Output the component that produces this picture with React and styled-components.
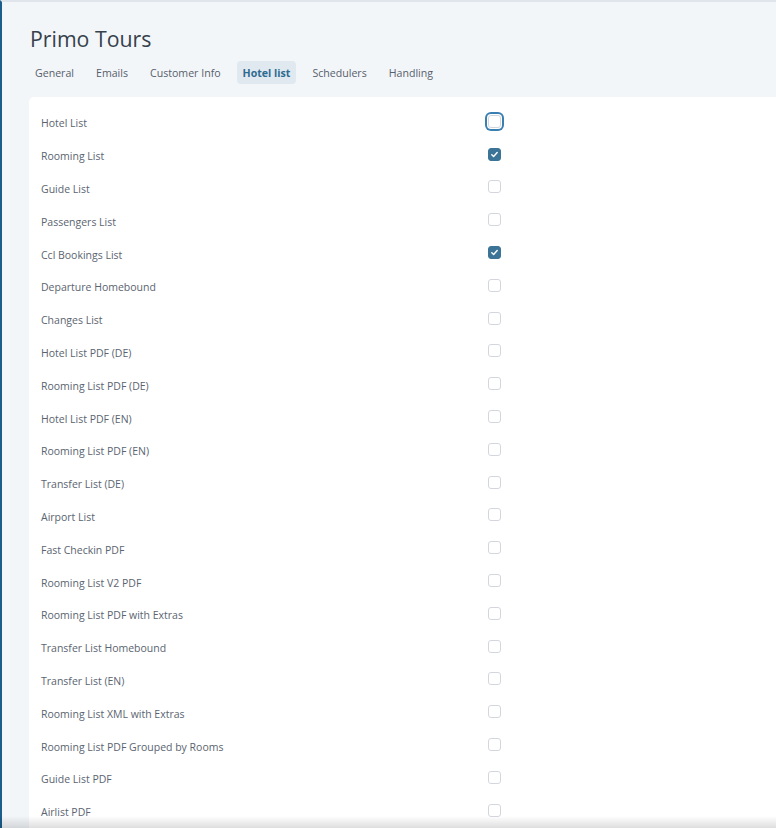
import React, { useState } from "react";
import styled, { createGlobalStyle } from "styled-components";

const Global = createGlobalStyle`
  html, body { margin: 0; padding: 0; }
  body {
    background: #f3f6f9;
    font-family: "Open Sans", "Noto Sans", sans-serif;
    overflow: hidden;
  }
`;

const Page = styled.div`
  min-height: 828px;
  box-sizing: border-box;
  border-left: 2px solid #1b5d8c;
  border-top: 2px solid #dfe5eb;
  background: #f3f6f9;
  padding: 0 0 0 27px;
`;

const Title = styled.h1`
  margin: 0;
  padding: 22px 0 0 1px;
  font-size: 21.3px;
  font-weight: 400;
  color: #36414c;
  line-height: 30px;
  height: 33px;
`;

const Tabs = styled.nav`
  display: flex;
  gap: 10px;
  margin-top: 4px;
`;

const Tab = styled.button`
  border: none;
  border-radius: 4px;
  padding: 0 6px;
  height: 23px;
  font-family: inherit;
  font-size: 10.6px;
  cursor: pointer;
  background: ${(p) => (p.$active ? "#e1e9f0" : "transparent")};
  color: ${(p) => (p.$active ? "#2f6b90" : "#56606b")};
  font-weight: ${(p) => (p.$active ? 700 : 400)};
`;

const Card = styled.section`
  margin-top: 13px;
  background: #fff;
  border-radius: 5px 0 0 0;
  padding: 10px 0 0 12px;
  min-height: 740px;
`;

const Row = styled.label`
  display: grid;
  grid-template-columns: 447px 13px;
  align-items: center;
  height: 32.8px;
  font-size: 10.5px;
  color: #5a6470;
`;

const Box = styled.span`
  width: 13px;
  height: 13px;
  box-sizing: border-box;
  border-radius: 3px;
  border: 1px solid ${(p) => (p.$checked ? "#3b7497" : "#d3d7dd")};
  background: ${(p) => (p.$checked ? "#3b7497" : "#fff")};
  display: flex;
  align-items: center;
  justify-content: center;
  margin-top: ${(p) => p.$dy || 0}px;
  box-shadow: ${(p) =>
    p.$focus ? "0 0 0 1px #fff, 0 0 0 3px #3a7fb1" : "none"};
`;

const BottomShade = styled.div`
  position: fixed;
  left: 0;
  right: 0;
  bottom: 0;
  height: 12px;
  background: linear-gradient(to bottom, rgba(0,0,0,0), rgba(0,0,0,0.13));
  pointer-events: none;
`;

const items = [
  ["Hotel List", false],
  ["Rooming List", true],
  ["Guide List", false],
  ["Passengers List", false],
  ["Ccl Bookings List", true],
  ["Departure Homebound", false],
  ["Changes List", false],
  ["Hotel List PDF (DE)", false],
  ["Rooming List PDF (DE)", false],
  ["Hotel List PDF (EN)", false],
  ["Rooming List PDF (EN)", false],
  ["Transfer List (DE)", false],
  ["Airport List", false],
  ["Fast Checkin PDF", false],
  ["Rooming List V2 PDF", false],
  ["Rooming List PDF with Extras", false],
  ["Transfer List Homebound", false],
  ["Transfer List (EN)", false],
  ["Rooming List XML with Extras", false],
  ["Rooming List PDF Grouped by Rooms", false],
  ["Guide List PDF", false],
  ["Airlist PDF", false],
];

const tabs = ["General", "Emails", "Customer Info", "Hotel list", "Schedulers", "Handling"];

const Check = () => (
  <svg width="9" height="9" viewBox="0 0 10 10">
    <path d="M2 5.3 L4 7.2 L8 2.8" fill="none" stroke="#fff" strokeWidth="1.6" strokeLinecap="round" strokeLinejoin="round" />
  </svg>
);

export default function App() {
  const [state, setState] = useState(items.map((i) => i[1]));
  return (
    <Page>
      <Global />
      <Title>Primo Tours</Title>
      <Tabs>
        {tabs.map((t) => (
          <Tab key={t} $active={t === "Hotel list"}>{t}</Tab>
        ))}
      </Tabs>
      <Card>
        {items.map(([label], i) => (
          <Row
            key={label}
            onClick={() => setState((s) => s.map((v, j) => (j === i ? !v : v)))}
          >
            <span>{label}</span>
            <Box $checked={state[i]} $focus={i === 0} $dy={-4}>
              {state[i] && <Check />}
            </Box>
          </Row>
        ))}
      </Card>
      <BottomShade />
    </Page>
  );
}
